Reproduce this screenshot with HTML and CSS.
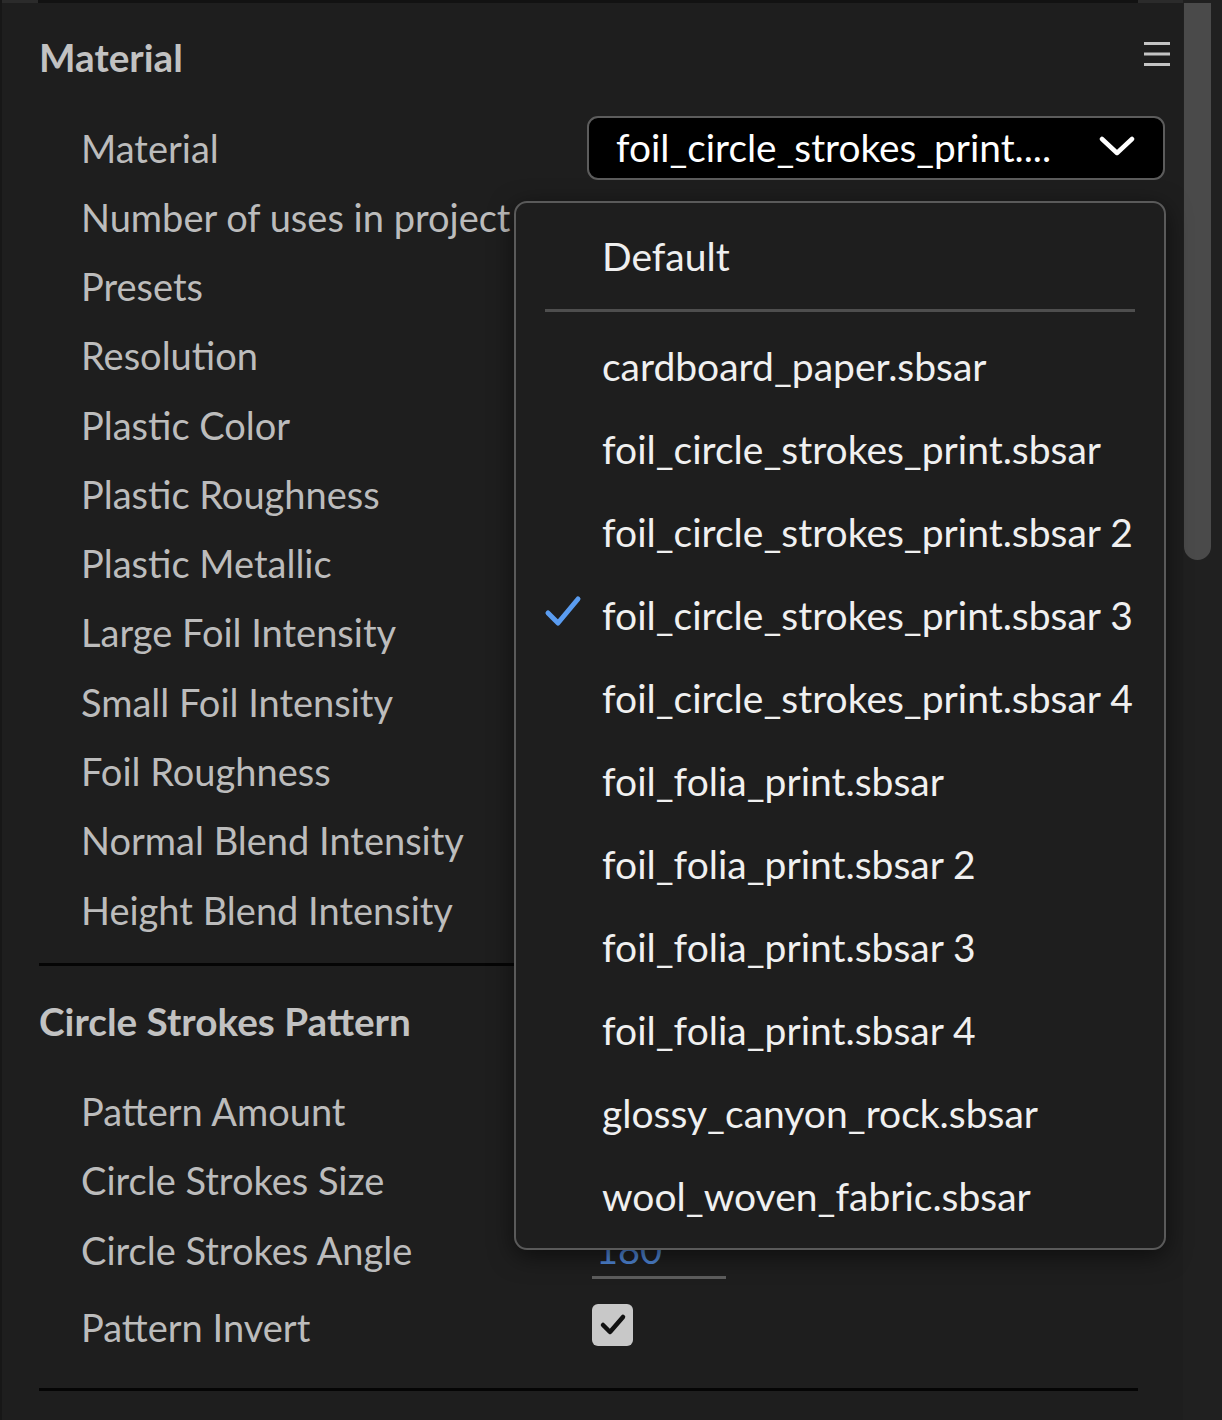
FILE: index.html
```html
<!DOCTYPE html>
<html>
<head>
<meta charset="utf-8">
<link rel="stylesheet" href="styles.css">
</head>
<body>
<div class="panel">
  <div class="main">
    <div class="topbar"><div class="topbar-seg"></div></div>
    <div class="content">
      <div class="section-head first">
        <span class="section-title">Material</span>
        <svg class="menu-icon" width="26" height="24" viewBox="0 0 26 24"><rect x="0" y="0" width="26" height="3" fill="#c4c4c4"/><rect x="0" y="10.5" width="26" height="3" fill="#c4c4c4"/><rect x="0" y="21" width="26" height="3" fill="#c4c4c4"/></svg>
      </div>
      <div class="row row-first">
        <span class="label">Material</span>
        <div class="select">
          <span class="select-text">foil_circle_strokes_print....</span>
          <svg class="chevron" width="36" height="22" viewBox="0 0 36 22"><path d="M3 4 L18 18 L33 4" fill="none" stroke="#fff" stroke-width="4.5" stroke-linecap="round" stroke-linejoin="round"/></svg>
        </div>
      </div>
      <div class="row"><span class="label">Number of uses in project</span></div>
      <div class="row"><span class="label">Presets</span></div>
      <div class="row"><span class="label">Resolution</span></div>
      <div class="row"><span class="label">Plastic Color</span></div>
      <div class="row"><span class="label">Plastic Roughness</span></div>
      <div class="row"><span class="label">Plastic Metallic</span></div>
      <div class="row"><span class="label">Large Foil Intensity</span></div>
      <div class="row"><span class="label">Small Foil Intensity</span></div>
      <div class="row"><span class="label">Foil Roughness</span></div>
      <div class="row"><span class="label">Normal Blend Intensity</span></div>
      <div class="row"><span class="label">Height Blend Intensity</span></div>
      <div class="divider div1"></div>
      <div class="section-head second">
        <span class="section-title">Circle Strokes Pattern</span>
      </div>
      <div class="row"><span class="label">Pattern Amount</span></div>
      <div class="row"><span class="label">Circle Strokes Size</span></div>
      <div class="row">
        <span class="label">Circle Strokes Angle</span>
        <div class="num"><span class="num-text">180</span></div>
      </div>
      <div class="row row-invert">
        <span class="label">Pattern Invert</span>
        <div class="checkbox">
          <svg width="28" height="24" viewBox="0 0 28 24"><path d="M4 12 L11 19 L24 4" fill="none" stroke="#111" stroke-width="4.5" stroke-linecap="round" stroke-linejoin="round"/></svg>
        </div>
      </div>
      <div class="divider div2"></div>
    </div>
  </div>
  <div class="scroll-track"><div class="scroll-thumb"></div></div>

  <div class="dropdown">
    <div class="dd-item dd-default">Default</div>
    <div class="dd-sep"></div>
    <div class="dd-list">
      <div class="dd-item">cardboard_paper.sbsar</div>
      <div class="dd-item">foil_circle_strokes_print.sbsar</div>
      <div class="dd-item">foil_circle_strokes_print.sbsar 2</div>
      <div class="dd-item selected">
        <svg class="dd-check" width="38" height="36" viewBox="0 0 38 36"><path d="M4 19 L14 29 L34 5" fill="none" stroke="#5a9cf0" stroke-width="5" stroke-linecap="round" stroke-linejoin="round"/></svg>
        foil_circle_strokes_print.sbsar 3
      </div>
      <div class="dd-item">foil_circle_strokes_print.sbsar 4</div>
      <div class="dd-item">foil_folia_print.sbsar</div>
      <div class="dd-item">foil_folia_print.sbsar 2</div>
      <div class="dd-item">foil_folia_print.sbsar 3</div>
      <div class="dd-item">foil_folia_print.sbsar 4</div>
      <div class="dd-item">glossy_canyon_rock.sbsar</div>
      <div class="dd-item">wool_woven_fabric.sbsar</div>
    </div>
  </div>
</div>
</body>
</html>
```

FILE: styles.css
```css
* { box-sizing: border-box; }
html, body { margin: 0; padding: 0; background: #1e1e1e; }
body {
  font-family: Lato, "Liberation Sans", sans-serif;
  color: #bdbdbd;
}
.panel {
  position: relative;
  width: 1222px;
  height: 1420px;
  display: flex;
  overflow: hidden;
  background: #1e1e1e;
  border-left: 2px solid #171717;
}
.main {
  width: 1181px;
  display: flex;
  flex-direction: column;
}
.topbar {
  height: 3px;
  background: #2b2b2b;
  padding-left: 36px;
}
.topbar-seg {
  width: 1100px;
  height: 3px;
  background: #121212;
}
.content {
  padding-left: 37px;
  padding-right: 13px;
  display: flex;
  flex-direction: column;
}
.section-head {
  display: flex;
  align-items: center;
  justify-content: space-between;
}
.section-head.first { height: 111px; }
.section-head.second { height: 110px; }
.section-title {
  font-weight: 700;
  font-size: 38.7px;
  color: #c2c2c2;
  line-height: 1;
}
.section-head.first .section-title { margin-top: -2px; }
.menu-icon { margin-top: -10px; display: block; }
.row {
  height: 69.3px;
  display: flex;
  align-items: center;
  padding-left: 42px;
}
.row-first { height: 68px; }
.row-invert { height: 86px; }
.label {
  width: 511px;
  flex: none;
  font-size: 38px;
  line-height: 1;
  color: #bcbcbc;
  white-space: nowrap;
}
.select {
  flex: none;
  width: 578px;
  height: 64px;
  margin-left: -5px;
  background: #000;
  border: 2px solid #5c5c5c;
  border-radius: 11px;
  display: flex;
  align-items: center;
  justify-content: space-between;
  padding: 0 28px 0 27px;
}
.select-text {
  color: #fff;
  font-size: 38.8px;
  line-height: 1;
  margin-top: -2px;
}
.chevron { display: block; margin-top: -4px; }
.num {
  width: 134px;
  height: 58px;
  border-bottom: 3px solid #5e5e5e;
  display: flex;
  align-items: flex-end;
  padding-left: 4px;
}
.num-text {
  color: #4f86d6;
  font-size: 38px;
  line-height: 1;
  padding-bottom: 8px;
}
.checkbox {
  width: 41px;
  height: 42px;
  margin-top: -5px;
  background: #c8c8c8;
  border-radius: 6px;
  display: flex;
  align-items: center;
  justify-content: center;
}
.checkbox svg { display: block; }
.divider {
  height: 3px;
  width: 1099px;
  background: #050505;
}
.div1 { margin-top: 19px; }
.div2 { margin-top: 18px; }
.scroll-track {
  width: 39px;
  flex: none;
  background: #202020;
  padding-top: 3px;
  padding-left: 1px;
}
.scroll-thumb {
  width: 27px;
  height: 557px;
  background: #4a4a4a;
  border-radius: 0 0 14px 14px;
}
.dropdown {
  position: absolute;
  left: 512px;
  top: 201px;
  width: 652px;
  height: 1049px;
  background: #1e1e1e;
  border: 2px solid #5a5a5a;
  border-radius: 13px;
  box-shadow: 0 6px 24px rgba(0,0,0,0.55);
  padding: 0 29px;
  color: #f0f0f0;
}
.dd-item {
  position: relative;
  height: 83px;
  display: flex;
  align-items: center;
  padding-left: 57px;
  font-size: 39px;
  line-height: 1;
  white-space: nowrap;
}
.dd-default { height: 106px; color: #efefef; }
.dd-sep {
  height: 3px;
  background: #4e4e4e;
}
.dd-list { padding-top: 13px; }
.dd-check {
  position: absolute;
  left: -1px;
  top: 20px;
}
```
